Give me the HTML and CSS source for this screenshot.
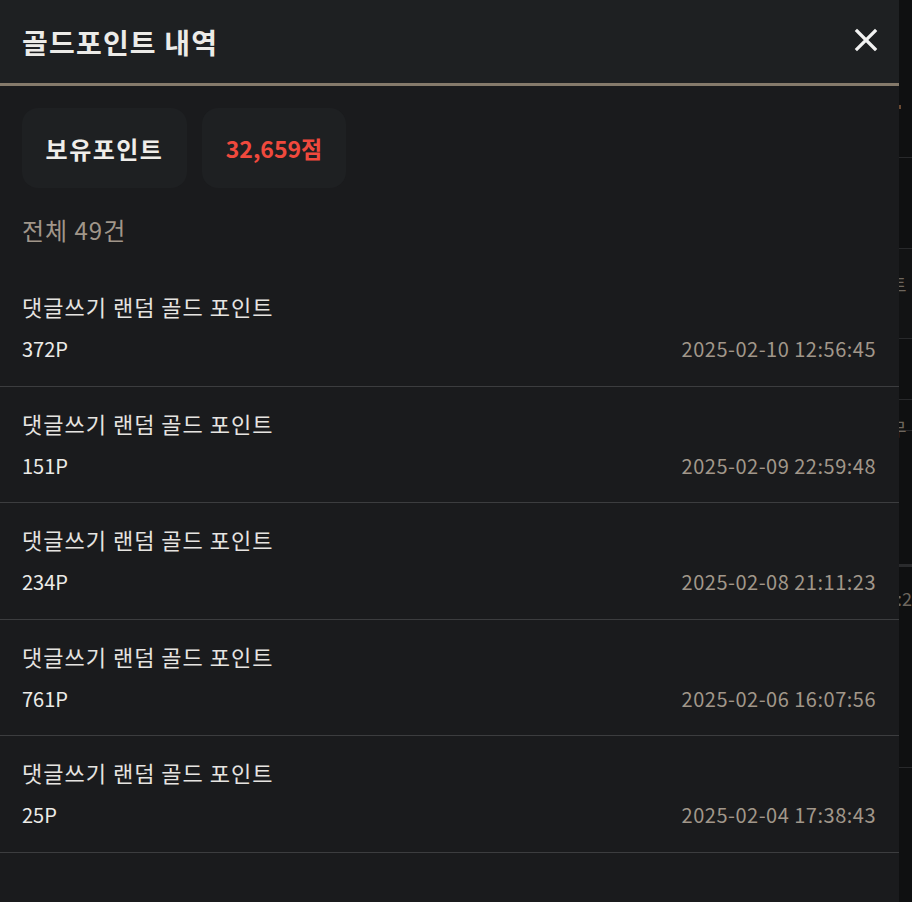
FILE: index.html
```html
<html>

<head>
  <meta name="viewport" content="width=device-width, initial-scale=1.0">
  <link rel="stylesheet" href="styles.css">
</head>

<body>
  <div class="page">
    <div class="panel">
      <div class="panel-head">
        <h1 class="panel-title">골드포인트 내역</h1>
        <button class="close-btn" aria-label="닫기">
          <svg width="24" height="24" viewBox="0 0 24 24">
            <path d="M3 3 L21 21 M21 3 L3 21" stroke="#f2f2f2" stroke-width="3.2" stroke-linecap="square" fill="none" />
          </svg>
        </button>
      </div>

      <div class="summary">
        <div class="summary-box summary-label">보유포인트</div>
        <div class="summary-box summary-value">32,659점</div>
      </div>

      <p class="total">전체 49건</p>

      <ul class="history">
        <li class="history-item">
          <p class="history-title">댓글쓰기 랜덤 골드 포인트</p>
          <div class="history-row">
            <span class="history-amount">372P</span>
            <span class="history-date">2025-02-10 12:56:45</span>
          </div>
        </li>
        <li class="history-item">
          <p class="history-title">댓글쓰기 랜덤 골드 포인트</p>
          <div class="history-row">
            <span class="history-amount">151P</span>
            <span class="history-date">2025-02-09 22:59:48</span>
          </div>
        </li>
        <li class="history-item">
          <p class="history-title">댓글쓰기 랜덤 골드 포인트</p>
          <div class="history-row">
            <span class="history-amount">234P</span>
            <span class="history-date">2025-02-08 21:11:23</span>
          </div>
        </li>
        <li class="history-item">
          <p class="history-title">댓글쓰기 랜덤 골드 포인트</p>
          <div class="history-row">
            <span class="history-amount">761P</span>
            <span class="history-date">2025-02-06 16:07:56</span>
          </div>
        </li>
        <li class="history-item">
          <p class="history-title">댓글쓰기 랜덤 골드 포인트</p>
          <div class="history-row">
            <span class="history-amount">25P</span>
            <span class="history-date">2025-02-04 17:38:43</span>
          </div>
        </li>
      </ul>
    </div>

    <!-- page underneath the drawer -->
    <div class="backdrop">
      <div class="bd-row bd-top"><span class="bd-dot"></span></div>
      <div class="bd-row bd-a"></div>
      <div class="bd-row bd-b"><span class="bd-text">트</span></div>
      <div class="bd-row bd-c"></div>
      <div class="bd-row bd-d"><span class="bd-text">무</span></div>
      <div class="bd-row bd-e"></div>
      <div class="bd-row bd-f"><span class="bd-text">:2</span></div>
    </div>
  </div>
</body>

</html>
```

FILE: styles.css
```css
body {
  margin: 0;
  background-color: #0f1011;
  font-family: "Noto Sans CJK KR", "Noto Sans", sans-serif;
}

.page {
  display: flex;
  height: 100vh;
  overflow: hidden;
}

.panel {
  width: 899px;
  flex-shrink: 0;
  background-color: #1a1b1d;
}

.panel-head {
  height: 83px;
  background-color: #1e2022;
  border-bottom: 3px solid #857a6b;
  display: flex;
  align-items: center;
  justify-content: space-between;
  padding: 0 21px 0 22px;
}

.panel-title {
  margin: 0;
  font-size: 28px;
  letter-spacing: 1.2px;
  font-weight: 700;
  color: #ecebe8;
}

.close-btn {
  background: none;
  border: none;
  padding: 0;
  width: 24px;
  height: 24px;
  margin-top: -4px;
}

.summary {
  display: flex;
  gap: 15px;
  padding: 22px 22px 0;
}

.summary-box {
  height: 80px;
  border-radius: 16px;
  background-color: #1e2022;
  display: flex;
  align-items: center;
  justify-content: center;
  font-weight: 700;
}

.summary-label {
  width: 165px;
  font-size: 24px;
  letter-spacing: 1.5px;
  color: #efedea;
}

.summary-value {
  width: 144px;
  font-size: 23px;
  color: #f0493d;
}

.total {
  margin: 26px 22px 0;
  font-size: 24px;
  letter-spacing: 1px;
  line-height: 32px;
  color: #a0968a;
}

.history {
  list-style: none;
  margin: 24px 0 0;
  padding: 0;
}

.history-item {
  padding: 21px 23px 23.5px 22px;
  border-bottom: 1px solid #3c3d3f;
}

.history-title {
  margin: 0;
  font-size: 22px;
  letter-spacing: 1px;
  line-height: 30px;
  color: #e6e4e1;
}

.history-row {
  display: flex;
  justify-content: space-between;
  align-items: center;
  margin-top: 14px;
  line-height: 27px;
}

.history-amount {
  font-size: 20px;
  color: #ecebe8;
}

.history-date {
  font-size: 20px;
  letter-spacing: 0.5px;
  color: #a1978a;
}

.backdrop {
  flex: 1;
  display: flex;
  flex-direction: column;
  overflow: hidden;
}

.bd-row {
  border-bottom: 1px solid #28292b;
  position: relative;
}

.bd-top {
  height: 157px;
}

.bd-dot {
  position: absolute;
  left: 0;
  top: 105px;
  width: 2px;
  height: 4px;
  background-color: #6b4a32;
}

.bd-a {
  height: 90px;
}

.bd-b {
  height: 89px;
  background-color: #121314;
}

.bd-c {
  height: 60px;
}

.bd-d {
  height: 30px;
}

.bd-e {
  height: 133px;
  border-bottom: 3px solid #2a2b2d;
}

.bd-f {
  height: 200px;
}

.bd-text {
  position: absolute;
  left: -9px;
  top: 22px;
  font-size: 18px;
  line-height: 26px;
  color: #6d665e;
  white-space: nowrap;
}

.bd-d .bd-text {
  top: 15px;
}

.bd-f .bd-text {
  top: 18px;
  left: -2px;
}
```
